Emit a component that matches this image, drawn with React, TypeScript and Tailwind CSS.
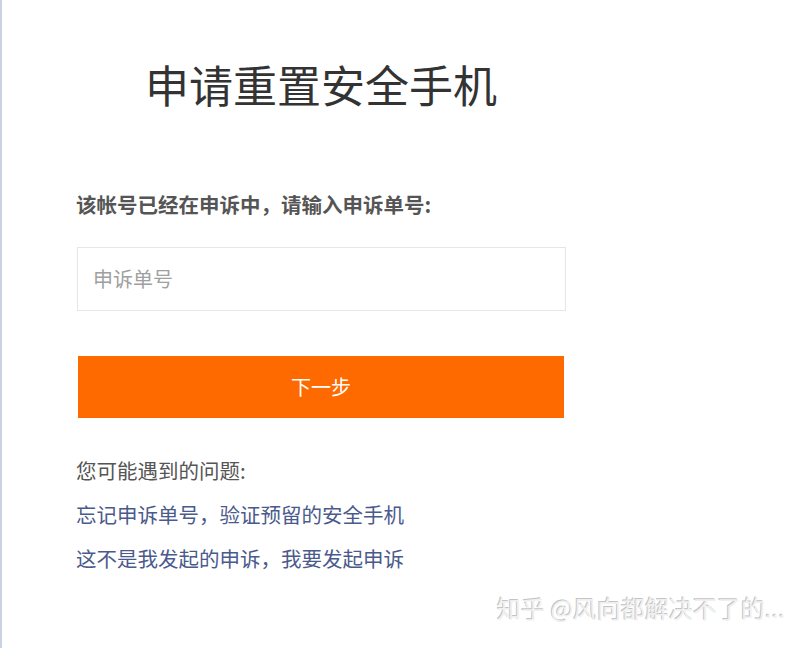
import React from "react";

export default function App() {
  return (
    <div
      className="relative h-[648px] w-[800px] overflow-hidden bg-white border-l-2 border-[#c9d2e2]"
      style={{ fontFamily: '"Noto Sans CJK SC", "Noto Sans", sans-serif' }}
    >
      <div className="flex flex-col pl-[75px]">
        <h1 className="ml-[68px] mt-[62px] h-[44px] text-[44px] leading-[44px] font-normal text-[#333333] whitespace-nowrap">
          申请重置安全手机
        </h1>
        <p className="-ml-[1px] mt-[88px] h-[20px] text-[20.5px] leading-[20px] font-bold text-[#555555] whitespace-nowrap">
          该帐号已经在申诉中，请输入申诉单号:
        </p>
        <div className="mt-[33px] flex h-[64px] w-[489px] items-center border border-[#e6e6e6] px-[15px]">
          <span className="text-[20px] leading-none text-[#a0a0a0]">申诉单号</span>
        </div>
        <button className="ml-[1px] mt-[45px] flex h-[62px] w-[486px] items-center justify-center bg-[#ff6a00] text-[20px] leading-none text-white">
          下一步
        </button>
        <div className="-ml-[1px] mt-[30px] flex flex-col text-[20.5px]">
          <div className="h-[44px] leading-[44px] text-[#555555]">您可能遇到的问题:</div>
          <div className="h-[44px] leading-[44px] text-[#4a5a8c]">忘记申诉单号，验证预留的安全手机</div>
          <div className="h-[44px] leading-[44px] text-[#4a5a8c]">这不是我发起的申诉，我要发起申诉</div>
        </div>
      </div>
      <div className="absolute left-[495px] top-[596px] whitespace-nowrap text-[24px] leading-none text-[#f0f0f0] [text-shadow:-1px_-1px_0_#c4c4c4]">
        知乎 @风向都解决不了的...
      </div>
    </div>
  );
}
